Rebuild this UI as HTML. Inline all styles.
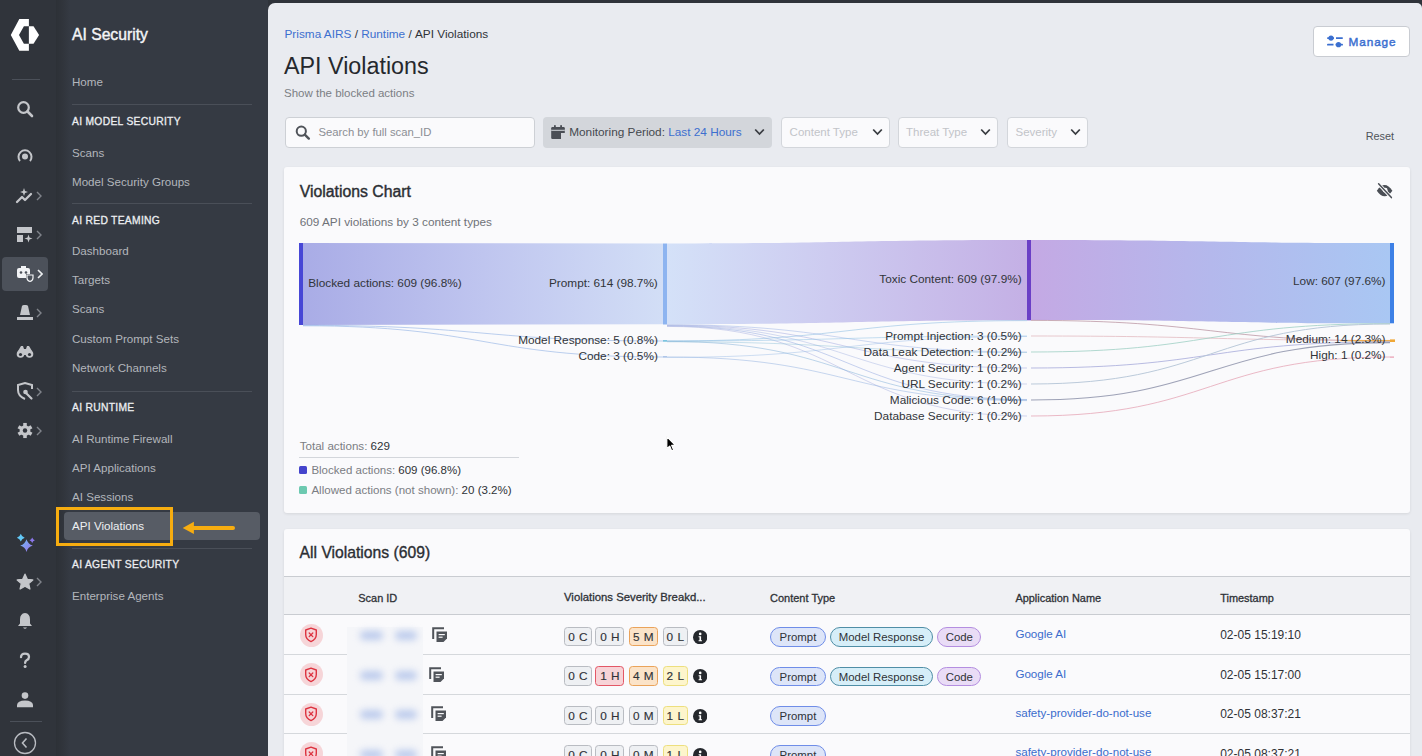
<!DOCTYPE html>
<html><head><meta charset="utf-8">
<style>
*{box-sizing:border-box;margin:0;padding:0}
html,body{width:1422px;height:756px;overflow:hidden;background:#2f333a;font-family:"Liberation Sans",sans-serif}
.abs{position:absolute}
.t{line-height:1;white-space:nowrap}
#rail{position:absolute;left:0;top:0;width:56px;height:756px;background:#30343b}
#nav{position:absolute;left:56px;top:0;width:212px;height:756px;background:linear-gradient(90deg,#2d3137 0px,#30343b 6px,#353a43 14px,#353a43 100%)}
#main{position:absolute;left:268px;top:2.5px;width:1154px;height:754px;background:#e9ebf0;border-top-left-radius:7px;border-top-right-radius:5px;overflow:hidden}
.nt{position:absolute;left:72px;font-size:11.6px;color:#b3b6bc;white-space:nowrap;line-height:14px}
.nh{position:absolute;left:72px;font-size:10.3px;color:#eceef1;white-space:nowrap;line-height:13px;letter-spacing:0.3px;-webkit-text-stroke:0.3px #eceef1}
.sep{position:absolute;left:72px;width:180px;height:1px;background:#4a4f58}
.ri{position:absolute;left:15px;width:20px;height:20px}
.chev{position:absolute;left:36px;width:6px;height:10px}
</style></head>
<body>
<div id="rail"></div>
<div id="nav"></div>
<!-- RAIL -->
<svg class="abs" style="left:0;top:0" width="50" height="60" viewBox="0 0 50 60">
<path d="M19.3 19 L28.9 19 L28.9 26.3 L23.9 26.3 L19 35 L23.9 43.7 L28.9 43.7 L28.9 50.7 L19.3 50.7 L10.8 35 Z" fill="#fff"/>
<path d="M28.9 26.3 L33.5 26.3 L39.1 35 L33.5 43.7 L28.9 43.7 Z" fill="#fff"/>
</svg>
<div class="abs" style="left:12px;top:79px;width:28px;height:1px;background:#4b5059"></div>
<!-- search -->
<svg class="abs" style="left:16px;top:100px" width="18" height="18" viewBox="0 0 18 18"><circle cx="7.5" cy="7.5" r="5.3" fill="none" stroke="#c4c6ca" stroke-width="2.2"/><path d="M11.5 11.5 L16 16" stroke="#c4c6ca" stroke-width="2.6" stroke-linecap="round"/></svg>
<!-- radio -->
<svg class="abs" style="left:16px;top:147px" width="18" height="18" viewBox="0 0 18 18"><path d="M4 14 A6.5 6.5 0 1 1 14 14" fill="none" stroke="#c4c6ca" stroke-width="2"/><circle cx="9" cy="9.5" r="3" fill="#c4c6ca"/></svg>
<!-- chart sparkle -->
<svg class="abs" style="left:15px;top:187px" width="20" height="18" viewBox="0 0 20 18"><path d="M2 15 L7 10 L10 13 L16 7" fill="none" stroke="#c4c6ca" stroke-width="2.3" stroke-linecap="round" stroke-linejoin="round"/><path d="M9 1 L10 4 L13 5 L10 6 L9 9 L8 6 L5 5 L8 4 Z" fill="#c4c6ca"/></svg>
<svg class="chev" style="top:191px" viewBox="0 0 6 10"><path d="M1 1 L5 5 L1 9" fill="none" stroke="#80848b" stroke-width="1.4"/></svg>
<!-- layout+ -->
<svg class="abs" style="left:16px;top:226px" width="18" height="17" viewBox="0 0 18 17"><rect x="1" y="1" width="15" height="6" fill="#c4c6ca"/><rect x="1" y="9" width="6" height="7" fill="#c4c6ca"/><path d="M12.5 8.5 L13.5 11.5 L16.5 12.5 L13.5 13.5 L12.5 16.5 L11.5 13.5 L8.5 12.5 L11.5 11.5 Z" fill="#c4c6ca"/></svg>
<svg class="chev" style="top:230px" viewBox="0 0 6 10"><path d="M1 1 L5 5 L1 9" fill="none" stroke="#80848b" stroke-width="1.4"/></svg>
<!-- selected -->
<div class="abs" style="left:2px;top:257px;width:46px;height:34px;background:#4c515a;border-radius:4px"></div>
<svg class="abs" style="left:16px;top:265px" width="19" height="18" viewBox="0 0 19 18"><rect x="1" y="3" width="13" height="10" rx="2" fill="#f2f3f5"/><rect x="5" y="1" width="5" height="3" fill="#f2f3f5"/><circle cx="5" cy="7.5" r="1.3" fill="#4c515a"/><circle cx="10" cy="7.5" r="1.3" fill="#4c515a"/><path d="M10 9 L18 9 L18 13 Q18 16 14 17.5 Q10 16 10 13 Z" fill="#4c515a"/><path d="M11 10 L17 10 L17 13 Q17 15.5 14 16.5 Q11 15.5 11 13 Z" fill="none" stroke="#f2f3f5" stroke-width="1.2"/></svg>
<svg class="chev" style="top:269px;left:37px" viewBox="0 0 6 10"><path d="M1 1 L5 5 L1 9" fill="none" stroke="#eceef0" stroke-width="1.6"/></svg>
<!-- siren -->
<svg class="abs" style="left:16px;top:304px" width="18" height="17" viewBox="0 0 18 17"><path d="M4 11 L6 2 Q6.5 1 8 1 L10 1 Q11.5 1 12 2 L14 11 Z" fill="#c4c6ca"/><rect x="1" y="13" width="16" height="3" fill="#c4c6ca"/></svg>
<svg class="chev" style="top:308px" viewBox="0 0 6 10"><path d="M1 1 L5 5 L1 9" fill="none" stroke="#80848b" stroke-width="1.4"/></svg>
<!-- binoculars -->
<svg class="abs" style="left:16px;top:345px" width="18" height="14" viewBox="0 0 18 14"><path d="M2 6 L5 1 L7 1 L8 4 L10 4 L11 1 L13 1 L16 6 Z" fill="#c4c6ca"/><circle cx="4.5" cy="9" r="3.8" fill="#c4c6ca"/><circle cx="13.5" cy="9" r="3.8" fill="#c4c6ca"/><rect x="7" y="6" width="4" height="4" fill="#c4c6ca"/><circle cx="4.5" cy="9.5" r="1.6" fill="#30343b"/><circle cx="13.5" cy="9.5" r="1.6" fill="#30343b"/></svg>
<!-- shield wrench -->
<svg class="abs" style="left:16px;top:382px" width="18" height="19" viewBox="0 0 18 19"><path d="M9 17 Q2 14 2 8 L2 3 L9 1 L16 3 L16 7" fill="none" stroke="#c4c6ca" stroke-width="2"/><path d="M9 10 L15.5 16.5" stroke="#c4c6ca" stroke-width="2.2" stroke-linecap="round"/><circle cx="9.5" cy="10" r="2.3" fill="#c4c6ca"/></svg>
<svg class="chev" style="top:387px" viewBox="0 0 6 10"><path d="M1 1 L5 5 L1 9" fill="none" stroke="#80848b" stroke-width="1.4"/></svg>
<!-- gear -->
<svg class="abs" style="left:17px;top:422px" width="16" height="17" viewBox="0 0 18 19"><g fill="#c4c6ca"><circle cx="9" cy="9.5" r="6"/><rect x="7" y="1" width="4" height="17"/><rect x="7" y="1" width="4" height="17" transform="rotate(60 9 9.5)"/><rect x="7" y="1" width="4" height="17" transform="rotate(120 9 9.5)"/></g><circle cx="9" cy="9.5" r="2.5" fill="#30343b"/></svg>
<svg class="chev" style="top:426px" viewBox="0 0 6 10"><path d="M1 1 L5 5 L1 9" fill="none" stroke="#80848b" stroke-width="1.4"/></svg>
<!-- sparkles colored -->
<svg class="abs" style="left:10px;top:528px" width="32" height="32" viewBox="0 0 32 32"><defs><linearGradient id="spg" x1="0" y1="0" x2="1" y2="1"><stop offset="0" stop-color="#6cc0f4"/><stop offset="1" stop-color="#9c6cec"/></linearGradient></defs><path d="M10.8 5.799999999999999 Q11.658000000000001 8.841999999999999 14.700000000000001 9.7 Q11.658000000000001 10.558 10.8 13.6 Q9.942 10.558 6.9 9.7 Q9.942 8.841999999999999 10.8 5.799999999999999 Z" fill="#62c8f6"/><path d="M22.2 9.600000000000001 Q22.794 11.706000000000001 24.9 12.3 Q22.794 12.894 22.2 15.0 Q21.605999999999998 12.894 19.5 12.3 Q21.605999999999998 11.706000000000001 22.2 9.600000000000001 Z" fill="#8c78ec"/><path d="M16.5 11.3 Q17.886 16.214000000000002 22.8 17.6 Q17.886 18.986 16.5 23.900000000000002 Q15.114 18.986 10.2 17.6 Q15.114 16.214000000000002 16.5 11.3 Z" fill="url(#spg)"/></svg>
<!-- star -->
<svg class="abs" style="left:16px;top:573px" width="18" height="18" viewBox="0 0 18 18"><path d="M9 1.2 L11.3 6.3 L16.8 6.9 L12.7 10.6 L13.9 16 L9 13.2 L4.1 16 L5.3 10.6 L1.2 6.9 L6.7 6.3 Z" fill="#c4c6ca" stroke="#c4c6ca" stroke-width="1.3" stroke-linejoin="round"/></svg>
<svg class="chev" style="top:577px" viewBox="0 0 6 10"><path d="M1 1 L5 5 L1 9" fill="none" stroke="#80848b" stroke-width="1.4"/></svg>
<!-- bell -->
<svg class="abs" style="left:17px;top:612px" width="16" height="18" viewBox="0 0 16 18"><path d="M8 1 Q13 1.5 13 7.5 L13 11.5 L15 14 L1 14 L3 11.5 L3 7.5 Q3 1.5 8 1 Z" fill="#c4c6ca"/><path d="M6 15.5 Q8 18 10 15.5 Z" fill="#c4c6ca"/></svg>
<!-- ? -->
<svg class="abs" style="left:18px;top:652px" width="14" height="17" viewBox="0 0 14 17"><path d="M3 5.2 Q3 1.6 7 1.6 Q11 1.6 11 4.9 Q11 7.1 8.6 8.3 Q7.1 9.1 7.1 10.9" fill="none" stroke="#c4c6ca" stroke-width="2.3" stroke-linecap="round"/><circle cx="7.1" cy="14.4" r="1.5" fill="#c4c6ca"/></svg>
<!-- user -->
<svg class="abs" style="left:16px;top:691px" width="18" height="17" viewBox="0 0 18 17"><circle cx="9" cy="4.6" r="3.3" fill="#c4c6ca"/><path d="M1 16.2 L1 14 Q1.5 9.4 9 9.4 Q16.5 9.4 17 14 L17 16.2 Z" fill="#c4c6ca"/></svg>
<div class="abs" style="left:10px;top:721px;width:32px;height:1px;background:#4b5059"></div>
<svg class="abs" style="left:13px;top:731px" width="24" height="24" viewBox="0 0 24 24"><circle cx="12" cy="12" r="10.5" fill="none" stroke="#b9bcc2" stroke-width="1.3"/><path d="M13.5 7.5 L9.5 12 L13.5 16.5" fill="none" stroke="#b9bcc2" stroke-width="1.6"/></svg>

<!-- NAV -->
<div class="abs" style="left:72px;top:24.8px;font-size:15.7px;color:#f4f5f7;line-height:20px;-webkit-text-stroke:0.4px #f4f5f7">AI Security</div>
<div class="nt" style="top:75px">Home</div>
<div class="sep" style="top:104px"></div>
<div class="nh" style="top:115px">AI MODEL SECURITY</div>
<div class="nt" style="top:145.5px">Scans</div>
<div class="nt" style="top:174.6px">Model Security Groups</div>
<div class="sep" style="top:203px"></div>
<div class="nh" style="top:214.2px">AI RED TEAMING</div>
<div class="nt" style="top:244px">Dashboard</div>
<div class="nt" style="top:273px">Targets</div>
<div class="nt" style="top:302.4px">Scans</div>
<div class="nt" style="top:332.2px">Custom Prompt Sets</div>
<div class="nt" style="top:361px">Network Channels</div>
<div class="sep" style="top:391px"></div>
<div class="nh" style="top:401.2px">AI RUNTIME</div>
<div class="nt" style="top:431.5px">AI Runtime Firewall</div>
<div class="nt" style="top:460.8px">API Applications</div>
<div class="nt" style="top:490px">AI Sessions</div>
<div class="abs" style="left:64px;top:512px;width:196px;height:28px;background:#575c65;border-radius:4px"></div>
<div class="nt" style="top:518.6px;color:#eef0f2">API Violations</div>
<div class="abs" style="left:56px;top:507px;width:117px;height:38.5px;border:3.2px solid #f7ad10"></div>
<svg class="abs" style="left:180px;top:520px" width="60" height="16" viewBox="0 0 60 16"><path d="M13 8 L53 8" stroke="#f7ad10" stroke-width="4" stroke-linecap="round"/><path d="M2.7 8 L13.9 1.8 L13.9 13.9 Z" fill="#f7ad10"/></svg>
<div class="sep" style="top:548px"></div>
<div class="nh" style="top:558px">AI AGENT SECURITY</div>
<div class="nt" style="top:588.5px">Enterprise Agents</div>

<div id="main"></div>
<!--MAIN1-->
<div class="abs t" style="left:284.5px;top:28.6px;font-size:11.8px;color:#2f3237;font-weight:normal;"><span style="color:#3d6fcf">Prisma AIRS</span>&nbsp;/&nbsp;<span style="color:#3d6fcf">Runtime</span>&nbsp;/&nbsp;API Violations</div>
<div class="abs t" style="left:284.0px;top:54.5px;font-size:23.3px;color:#25282d;font-weight:normal;">API Violations</div>
<div class="abs t" style="left:284.0px;top:87.7px;font-size:11.5px;color:#7b7e84;font-weight:normal;">Show the blocked actions</div>
<div class="abs" style="left:1312.5px;top:26px;width:97px;height:31px;background:#fff;border:1px solid #c9ccd2;border-radius:4px"></div>
<svg class="abs" style="left:1326px;top:35px" width="18" height="13" viewBox="0 0 18 13"><g fill="#3b6fd0"><rect x="1" y="2.2" width="16" height="1.8" rx=".9"/><rect x="1" y="8.8" width="16" height="1.8" rx=".9"/><circle cx="5" cy="3.1" r="2.6"/><circle cx="12.5" cy="9.7" r="2.6"/></g><rect x="8" y="1.5" width="2" height="3" fill="#fff"/><rect x="7.5" y="8" width="2" height="3" fill="#fff"/></svg>
<div class="abs t" style="left:1348.5px;top:36.6px;font-size:11.8px;color:#3b6fd0;font-weight:normal;letter-spacing:0.9px;-webkit-text-stroke:0.45px #3b6fd0">Manage</div>
<div class="abs" style="left:284.5px;top:116.5px;width:250px;height:31px;background:#fafafc;border:1px solid #cdd0d5;border-radius:4px"></div>
<svg class="abs" style="left:295px;top:125px" width="16" height="15" viewBox="0 0 16 15"><circle cx="6.3" cy="6.2" r="4.6" fill="none" stroke="#50545a" stroke-width="2"/><path d="M9.8 9.6 L13.8 13.6" stroke="#50545a" stroke-width="2.4" stroke-linecap="round"/></svg>
<div class="abs t" style="left:318.4px;top:126.5px;font-size:11.3px;color:#8b8e94;font-weight:normal;">Search by full scan_ID</div>
<div class="abs" style="left:543px;top:116.5px;width:229px;height:31px;background:#d3d6db;border-radius:4px"></div>
<svg class="abs" style="left:550px;top:124px" width="16" height="16" viewBox="0 0 16 16"><g fill="#4a4e55"><rect x="1.2" y="3" width="13.6" height="12" rx="1.2"/><rect x="4" y="1.2" width="1.8" height="3"/><rect x="10.2" y="1.2" width="1.8" height="3"/></g><rect x="1.2" y="5.8" width="13.6" height="1" fill="#d3d6db"/><rect x="11" y="9" width="4" height="6" fill="#d3d6db"/></svg>
<div class="abs t" style="left:569.2px;top:126.9px;font-size:11.8px;color:#45494f;font-weight:normal;">Monitoring Period: <span style="color:#3d6fcf">Last 24 Hours</span></div>
<svg class="abs" style="left:753.5px;top:127.5px" width="11" height="8" viewBox="0 0 11 8"><path d="M1.2 1.5 L5.5 6 L9.8 1.5" fill="none" stroke="#3a3d42" stroke-width="1.8"/></svg>
<div class="abs" style="left:781px;top:116.5px;width:108.5px;height:31px;background:#fafafc;border:1px solid #d3d6db;border-radius:4px"></div>
<div class="abs t" style="left:789.6px;top:127.3px;font-size:11.5px;color:#c2c4c9;font-weight:normal;">Content Type</div>
<svg class="abs" style="left:871.5px;top:127.5px" width="11" height="8" viewBox="0 0 11 8"><path d="M1.2 1.5 L5.5 6 L9.8 1.5" fill="none" stroke="#3a3d42" stroke-width="1.8"/></svg>
<div class="abs" style="left:897.5px;top:116.5px;width:100.0px;height:31px;background:#fafafc;border:1px solid #d3d6db;border-radius:4px"></div>
<div class="abs t" style="left:906.0px;top:127.3px;font-size:11.5px;color:#c2c4c9;font-weight:normal;">Threat Type</div>
<svg class="abs" style="left:980px;top:127.5px" width="11" height="8" viewBox="0 0 11 8"><path d="M1.2 1.5 L5.5 6 L9.8 1.5" fill="none" stroke="#3a3d42" stroke-width="1.8"/></svg>
<div class="abs" style="left:1007px;top:116.5px;width:80.5px;height:31px;background:#fafafc;border:1px solid #d3d6db;border-radius:4px"></div>
<div class="abs t" style="left:1015.5px;top:127.3px;font-size:11.5px;color:#c2c4c9;font-weight:normal;">Severity</div>
<svg class="abs" style="left:1069.5px;top:127.5px" width="11" height="8" viewBox="0 0 11 8"><path d="M1.2 1.5 L5.5 6 L9.8 1.5" fill="none" stroke="#3a3d42" stroke-width="1.8"/></svg>
<div class="abs t" style="left:1365.7px;top:131.2px;font-size:10.9px;color:#50545a;font-weight:normal;">Reset</div>
<!--/MAIN1-->
<!--MAIN2-->
<div class="abs" style="left:284px;top:167px;width:1126px;height:345.5px;background:#fafafc;border-radius:3px;box-shadow:0 1px 3px rgba(0,0,0,0.09)"></div>
<div class="abs t" style="left:299.7px;top:183.5px;font-size:15.8px;color:#2b2e33;font-weight:normal;-webkit-text-stroke:0.4px #2b2e33;">Violations Chart</div>
<div class="abs t" style="left:299.7px;top:216.0px;font-size:11.77px;color:#6f7278;font-weight:normal;">609 API violations by 3 content types</div>
<svg class="abs" style="left:1375px;top:182px" width="19" height="18" viewBox="0 0 19 18"><path d="M1.8 8.7 Q9.6 -2.5 17.4 8.7 Q9.6 19.9 1.8 8.7 Z" fill="#4a4e55"/><circle cx="10.2" cy="8.2" r="2.4" fill="#fafafc"/><path d="M3.6 1.8 L16.4 15.6" stroke="#fafafc" stroke-width="3.4"/><path d="M3.6 1.8 L16.4 15.6" stroke="#4a4e55" stroke-width="1.5" stroke-linecap="round"/></svg>
<svg class="abs" style="left:0;top:0" width="1422" height="756" viewBox="0 0 1422 756">
<defs>
<linearGradient id="g1" x1="0" x2="1"><stop offset="0" stop-color="#a9ace6"/><stop offset="0.5" stop-color="#bfc5ef"/><stop offset="1" stop-color="#d2def6"/></linearGradient>
<linearGradient id="g2" x1="0" x2="1"><stop offset="0" stop-color="#d4e1f8"/><stop offset="0.45" stop-color="#cdcbf0"/><stop offset="1" stop-color="#c4b0e5"/></linearGradient>
<linearGradient id="g3" x1="0" x2="1"><stop offset="0" stop-color="#c4a9e4"/><stop offset="0.5" stop-color="#b4b8ec"/><stop offset="1" stop-color="#a9c7f3"/></linearGradient>
</defs>
<path d="M303 243 L663 243.5 L663 324.3 L303 325 Z" fill="url(#g1)"/>
<path d="M667 243.5 C849 243.5 849 240 1027 240 L1027 320.3 C849 320.3 849 324.3 667 324.3 Z" fill="url(#g2)"/>
<path d="M1031 240 C1210 240 1210 243 1390 243 L1390 323.3 C1210 323.3 1210 320 1031 320 Z" fill="url(#g3)"/>
<path d="M303 325.3 C483.0 325.3 483.0 341 663 341" fill="none" stroke="#8fb0e4" stroke-width="1.0" stroke-opacity="0.6"/>
<path d="M303 325.8 C483.0 325.8 483.0 357 663 357" fill="none" stroke="#8fb0e4" stroke-width="1.0" stroke-opacity="0.6"/>
<path d="M667 324.8 C847.0 324.8 847.0 352 1027 352" fill="none" stroke="#9bb3e6" stroke-width="1.0" stroke-opacity="0.5"/>
<path d="M667 325.2 C847.0 325.2 847.0 368 1027 368" fill="none" stroke="#9fa8e0" stroke-width="1.0" stroke-opacity="0.5"/>
<path d="M667 325.6 C847.0 325.6 847.0 384 1027 384" fill="none" stroke="#a9b8e4" stroke-width="1.0" stroke-opacity="0.5"/>
<path d="M667 326 C847.0 326 847.0 399.5 1027 399.5" fill="none" stroke="#8fa6e0" stroke-width="1.0" stroke-opacity="0.5"/>
<path d="M667 326.4 C847.0 326.4 847.0 416 1027 416" fill="none" stroke="#a8b0e0" stroke-width="1.0" stroke-opacity="0.5"/>
<path d="M667 341 C847.0 341 847.0 320.6 1027 320.6" fill="none" stroke="#7fb6e0" stroke-width="1.0" stroke-opacity="0.5"/>
<path d="M667 341 C847.0 341 847.0 336 1027 336" fill="none" stroke="#8cc0e4" stroke-width="1.0" stroke-opacity="0.5"/>
<path d="M667 341.4 C847.0 341.4 847.0 400 1027 400" fill="none" stroke="#7eaed8" stroke-width="1.0" stroke-opacity="0.5"/>
<path d="M667 341.8 C847.0 341.8 847.0 352.5 1027 352.5" fill="none" stroke="#94c4da" stroke-width="1.0" stroke-opacity="0.5"/>
<path d="M667 357 C847.0 357 847.0 400.6 1027 400.6" fill="none" stroke="#8fb0e0" stroke-width="1.0" stroke-opacity="0.5"/>
<path d="M667 357.4 C847.0 357.4 847.0 336.5 1027 336.5" fill="none" stroke="#a0c0e8" stroke-width="1.0" stroke-opacity="0.5"/>
<path d="M1031 320.4 C1210.5 320.4 1210.5 341 1390 341" fill="none" stroke="#a87888" stroke-width="1.0" stroke-opacity="0.6"/>
<path d="M1031 336 C1210.5 336 1210.5 340.4 1390 340.4" fill="none" stroke="#e6c2c8" stroke-width="1.0" stroke-opacity="0.9"/>
<path d="M1031 352 C1210.5 352 1210.5 323.6 1390 323.6" fill="none" stroke="#9fd0c4" stroke-width="1.0" stroke-opacity="0.8"/>
<path d="M1031 368 C1210.5 368 1210.5 341.8 1390 341.8" fill="none" stroke="#9b9fd6" stroke-width="1.0" stroke-opacity="0.7"/>
<path d="M1031 384 C1210.5 384 1210.5 324 1390 324" fill="none" stroke="#b4c4d6" stroke-width="1.0" stroke-opacity="0.9"/>
<path d="M1031 400 C1210.5 400 1210.5 342.6 1390 342.6" fill="none" stroke="#606888" stroke-width="1.1" stroke-opacity="0.6"/>
<path d="M1031 416 C1210.5 416 1210.5 357 1390 357" fill="none" stroke="#e6a8b8" stroke-width="1.0" stroke-opacity="0.8"/>
<rect x="299" y="243" width="4" height="82" fill="#4747d6"/>
<rect x="663" y="243.5" width="4" height="81" fill="#8db4f0"/>
<rect x="1027" y="240" width="4" height="80.3" fill="#6a3fc6"/>
<rect x="1390" y="243" width="4" height="80.3" fill="#3d80e6"/>
<rect x="663" y="340.2" width="4" height="1.4" fill="#5fb8d8"/>
<rect x="663" y="356.3" width="4" height="1.2" fill="#8fb0e0"/>
<path d="M1340 340.6 C1365.0 340.6 1365.0 340.6 1390 340.6" fill="none" stroke="#f0a838" stroke-width="1.4" stroke-opacity="0.8"/>
<rect x="1390" y="339.4" width="5" height="2.6" fill="#f0a838"/>
<rect x="1390" y="356.5" width="4" height="1.2" fill="#e89ab0"/>
</svg>
<div class="abs t" style="left:308.2px;top:278.3px;font-size:11.8px;color:#313439;font-weight:normal;">Blocked actions: 609 (96.8%)</div>
<div class="abs t" style="right:764.2px;top:278.3px;font-size:11.8px;color:#313439;font-weight:normal;">Prompt: 614 (98.7%)</div>
<div class="abs t" style="right:764.2px;top:334.8px;font-size:11.8px;color:#313439;font-weight:normal;">Model Response: 5 (0.8%)</div>
<div class="abs t" style="right:764.2px;top:350.6px;font-size:11.8px;color:#313439;font-weight:normal;">Code: 3 (0.5%)</div>
<div class="abs t" style="right:400.4px;top:274.3px;font-size:11.8px;color:#313439;font-weight:normal;">Toxic Content: 609 (97.9%)</div>
<div class="abs t" style="right:400.4px;top:331.0px;font-size:11.8px;color:#313439;font-weight:normal;">Prompt Injection: 3 (0.5%)</div>
<div class="abs t" style="right:400.4px;top:347.0px;font-size:11.8px;color:#313439;font-weight:normal;">Data Leak Detection: 1 (0.2%)</div>
<div class="abs t" style="right:400.4px;top:362.9px;font-size:11.8px;color:#313439;font-weight:normal;">Agent Security: 1 (0.2%)</div>
<div class="abs t" style="right:400.4px;top:378.9px;font-size:11.8px;color:#313439;font-weight:normal;">URL Security: 1 (0.2%)</div>
<div class="abs t" style="right:400.4px;top:394.8px;font-size:11.8px;color:#313439;font-weight:normal;">Malicious Code: 6 (1.0%)</div>
<div class="abs t" style="right:400.4px;top:410.8px;font-size:11.8px;color:#313439;font-weight:normal;">Database Security: 1 (0.2%)</div>
<div class="abs t" style="right:36.5px;top:276.2px;font-size:11.8px;color:#313439;font-weight:normal;">Low: 607 (97.6%)</div>
<div class="abs t" style="right:36.5px;top:334.2px;font-size:11.8px;color:#313439;font-weight:normal;">Medium: 14 (2.3%)</div>
<div class="abs t" style="right:36.5px;top:350.3px;font-size:11.8px;color:#313439;font-weight:normal;">High: 1 (0.2%)</div>
<div class="abs t" style="left:299.7px;top:440.4px;font-size:11.6px;color:#7a7d83;font-weight:normal;">Total actions: <span style="color:#2f3237">629</span></div>
<div class="abs" style="left:299px;top:457px;width:220px;height:1px;background:#d3d6db"></div>
<div class="abs" style="left:299px;top:466.3px;width:7.5px;height:7.5px;background:#4444cc;border-radius:1.5px"></div>
<div class="abs t" style="left:311.4px;top:465.1px;font-size:11.5px;color:#7a7d83;font-weight:normal;">Blocked actions: <span style="color:#2f3237">609 (96.8%)</span></div>
<div class="abs" style="left:299px;top:486.3px;width:7.5px;height:7.5px;background:#6cc9b0;border-radius:1.5px"></div>
<div class="abs t" style="left:311.4px;top:485.2px;font-size:11.55px;color:#7a7d83;font-weight:normal;">Allowed actions (not shown): <span style="color:#2f3237">20 (3.2%)</span></div>
<!--/MAIN2-->
<!--MAIN3-->
<div class="abs" style="left:284px;top:529px;width:1126px;height:240px;background:#fafafc;border-radius:3px;box-shadow:0 1px 3px rgba(0,0,0,0.09)"></div>
<div class="abs t" style="left:299.6px;top:545.2px;font-size:15.7px;color:#2b2e33;font-weight:normal;-webkit-text-stroke:0.35px #2b2e33;">All Violations (609)</div>
<div class="abs" style="left:284px;top:576px;width:1126px;height:39px;background:#f0f1f4;border-top:1px solid #c9ccd1;border-bottom:1px solid #c9ccd1"></div>
<div class="abs t" style="left:358.3px;top:592.6px;font-size:10.96px;color:#2f3237;font-weight:normal;-webkit-text-stroke:0.3px #2f3237;">Scan ID</div>
<div class="abs t" style="left:564.0px;top:592.3px;font-size:11.35px;color:#2f3237;font-weight:normal;-webkit-text-stroke:0.3px #2f3237;">Violations Severity Breakd...</div>
<div class="abs t" style="left:770.0px;top:592.6px;font-size:11.0px;color:#2f3237;font-weight:normal;-webkit-text-stroke:0.3px #2f3237;">Content Type</div>
<div class="abs t" style="left:1015.4px;top:592.6px;font-size:10.95px;color:#2f3237;font-weight:normal;-webkit-text-stroke:0.3px #2f3237;">Application Name</div>
<div class="abs t" style="left:1220.2px;top:592.6px;font-size:10.95px;color:#2f3237;font-weight:normal;-webkit-text-stroke:0.3px #2f3237;">Timestamp</div>
<div class="abs" style="left:284px;top:654.0px;width:1126px;height:1px;background:#d5d8dc"></div>
<div class="abs" style="left:284px;top:693.7px;width:1126px;height:1px;background:#d5d8dc"></div>
<div class="abs" style="left:284px;top:733.2px;width:1126px;height:1px;background:#d5d8dc"></div>
<div class="abs" style="left:347px;top:627px;width:76px;height:130px;background:#f5f6f9"></div>
<div class="abs" style="left:299.59999999999997px;top:623.6999999999999px;width:23.2px;height:23.2px;border-radius:50%;background:#f6d5d8"></div>
<svg class="abs" style="left:304.2px;top:627.3px" width="14" height="16" viewBox="0 0 14 16"><path d="M7 1.2 L12.3 3 L12.3 7.6 Q12.3 12.3 7 14.6 Q1.7 12.3 1.7 7.6 L1.7 3 Z" fill="none" stroke="#dd3340" stroke-width="1.4" stroke-linejoin="round"/><path d="M5.2 6 L8.8 9.6 M8.8 6 L5.2 9.6" stroke="#dd3340" stroke-width="1.3" stroke-linecap="round"/></svg>
<div class="abs" style="left:360px;top:631.3px;width:23px;height:9px;border-radius:5px;background:#bccbec;filter:blur(3.5px)"></div>
<div class="abs" style="left:395px;top:631.3px;width:22px;height:9px;border-radius:5px;background:#bccbec;filter:blur(3.5px)"></div>
<svg class="abs" style="left:431.5px;top:627.3px" width="16" height="16" viewBox="0 0 16 16"><path d="M1.2 12 L1.2 1.2 L12 1.2" fill="none" stroke="#50545a" stroke-width="2"/><path d="M4.5 4.5 L15 4.5 L15 11.5 L11.5 15 L4.5 15 Z" fill="#50545a"/><rect x="6.6" y="7" width="6.2" height="1.2" fill="#fafafc"/><rect x="6.6" y="9.6" width="4" height="1.2" fill="#fafafc"/></svg>
<div class="abs t" style="left:564.3px;top:626.8px;width:27.3px;height:19.3px;background:#eef0f3;border:1px solid #b9bcc2;border-radius:3.5px;font-size:11.8px;line-height:19.2px;text-align:center;color:#2f3237;letter-spacing:0.5px;padding-left:0.5px;-webkit-text-stroke:0.15px #2f3237">0 C</div>
<div class="abs t" style="left:595.4px;top:626.8px;width:29px;height:19.3px;background:#eef0f3;border:1px solid #b9bcc2;border-radius:3.5px;font-size:11.8px;line-height:19.2px;text-align:center;color:#2f3237;letter-spacing:0.5px;padding-left:0.5px;-webkit-text-stroke:0.15px #2f3237">0 H</div>
<div class="abs t" style="left:628.7px;top:626.8px;width:29.3px;height:19.3px;background:#fbe3c8;border:1px solid #eaa35a;border-radius:3.5px;font-size:11.8px;line-height:19.2px;text-align:center;color:#2f3237;letter-spacing:0.5px;padding-left:0.5px;-webkit-text-stroke:0.15px #2f3237">5 M</div>
<div class="abs t" style="left:662.7px;top:626.8px;width:25.2px;height:19.3px;background:#eef0f3;border:1px solid #b9bcc2;border-radius:3.5px;font-size:11.8px;line-height:19.2px;text-align:center;color:#2f3237;letter-spacing:0.5px;padding-left:0.5px;-webkit-text-stroke:0.15px #2f3237">0 L</div>
<svg class="abs" style="left:692.5999999999999px;top:629.5999999999999px" width="14.4" height="14.4" viewBox="0 0 14.4 14.4"><circle cx="7.2" cy="7.2" r="7.2" fill="#25282d"/><circle cx="7.2" cy="3.9" r="1.3" fill="#fff"/><path d="M5.6 6.2 L8.1 6.2 L8.1 10.2 L9 10.2 L9 11.3 L5.6 11.3 L5.6 10.2 L6.5 10.2 L6.5 7.3 L5.6 7.3 Z" fill="#fff"/></svg>
<div class="abs t" style="left:770.1px;top:627.0999999999999px;width:55.7px;height:19.6px;background:#dde5f8;border:1px solid #6f8de8;border-radius:10px;font-size:11.4px;line-height:19px;text-align:center;color:#2f3237">Prompt</div>
<div class="abs t" style="left:830.0px;top:627.0999999999999px;width:103px;height:19.6px;background:#d6eef8;border:1px solid #4f8ea6;border-radius:10px;font-size:11.4px;line-height:19px;text-align:center;color:#2f3237">Model Response</div>
<div class="abs t" style="left:937.2px;top:627.0999999999999px;width:44.2px;height:19.6px;background:#e9dcf6;border:1px solid #b48ee0;border-radius:10px;font-size:11.4px;line-height:19px;text-align:center;color:#2f3237">Code</div>
<div class="abs t" style="left:1015.4px;top:628.1px;font-size:11.6px;color:#3b6ccc;font-weight:normal;">Google AI</div>
<div class="abs t" style="left:1220.2px;top:629.4px;font-size:12.0px;color:#2f3237;font-weight:normal;">02-05 15:19:10</div>
<div class="abs" style="left:299.59999999999997px;top:663.1999999999999px;width:23.2px;height:23.2px;border-radius:50%;background:#f6d5d8"></div>
<svg class="abs" style="left:304.2px;top:666.8px" width="14" height="16" viewBox="0 0 14 16"><path d="M7 1.2 L12.3 3 L12.3 7.6 Q12.3 12.3 7 14.6 Q1.7 12.3 1.7 7.6 L1.7 3 Z" fill="none" stroke="#dd3340" stroke-width="1.4" stroke-linejoin="round"/><path d="M5.2 6 L8.8 9.6 M8.8 6 L5.2 9.6" stroke="#dd3340" stroke-width="1.3" stroke-linecap="round"/></svg>
<div class="abs" style="left:360px;top:670.8px;width:23px;height:9px;border-radius:5px;background:#bccbec;filter:blur(3.5px)"></div>
<div class="abs" style="left:395px;top:670.8px;width:22px;height:9px;border-radius:5px;background:#bccbec;filter:blur(3.5px)"></div>
<svg class="abs" style="left:428.5px;top:666.8px" width="16" height="16" viewBox="0 0 16 16"><path d="M1.2 12 L1.2 1.2 L12 1.2" fill="none" stroke="#50545a" stroke-width="2"/><path d="M4.5 4.5 L15 4.5 L15 11.5 L11.5 15 L4.5 15 Z" fill="#50545a"/><rect x="6.6" y="7" width="6.2" height="1.2" fill="#fafafc"/><rect x="6.6" y="9.6" width="4" height="1.2" fill="#fafafc"/></svg>
<div class="abs t" style="left:564.3px;top:666.3px;width:27.3px;height:19.3px;background:#eef0f3;border:1px solid #b9bcc2;border-radius:3.5px;font-size:11.8px;line-height:19.2px;text-align:center;color:#2f3237;letter-spacing:0.5px;padding-left:0.5px;-webkit-text-stroke:0.15px #2f3237">0 C</div>
<div class="abs t" style="left:595.4px;top:666.3px;width:29px;height:19.3px;background:#f7d3d7;border:1px solid #e35766;border-radius:3.5px;font-size:11.8px;line-height:19.2px;text-align:center;color:#2f3237;letter-spacing:0.5px;padding-left:0.5px;-webkit-text-stroke:0.15px #2f3237">1 H</div>
<div class="abs t" style="left:628.7px;top:666.3px;width:29.3px;height:19.3px;background:#fbe3c8;border:1px solid #eaa35a;border-radius:3.5px;font-size:11.8px;line-height:19.2px;text-align:center;color:#2f3237;letter-spacing:0.5px;padding-left:0.5px;-webkit-text-stroke:0.15px #2f3237">4 M</div>
<div class="abs t" style="left:662.7px;top:666.3px;width:25.2px;height:19.3px;background:#fdf5cc;border:1px solid #eddf7e;border-radius:3.5px;font-size:11.8px;line-height:19.2px;text-align:center;color:#2f3237;letter-spacing:0.5px;padding-left:0.5px;-webkit-text-stroke:0.15px #2f3237">2 L</div>
<svg class="abs" style="left:692.5999999999999px;top:669.0999999999999px" width="14.4" height="14.4" viewBox="0 0 14.4 14.4"><circle cx="7.2" cy="7.2" r="7.2" fill="#25282d"/><circle cx="7.2" cy="3.9" r="1.3" fill="#fff"/><path d="M5.6 6.2 L8.1 6.2 L8.1 10.2 L9 10.2 L9 11.3 L5.6 11.3 L5.6 10.2 L6.5 10.2 L6.5 7.3 L5.6 7.3 Z" fill="#fff"/></svg>
<div class="abs t" style="left:770.1px;top:666.5999999999999px;width:55.7px;height:19.6px;background:#dde5f8;border:1px solid #6f8de8;border-radius:10px;font-size:11.4px;line-height:19px;text-align:center;color:#2f3237">Prompt</div>
<div class="abs t" style="left:830.0px;top:666.5999999999999px;width:103px;height:19.6px;background:#d6eef8;border:1px solid #4f8ea6;border-radius:10px;font-size:11.4px;line-height:19px;text-align:center;color:#2f3237">Model Response</div>
<div class="abs t" style="left:937.2px;top:666.5999999999999px;width:44.2px;height:19.6px;background:#e9dcf6;border:1px solid #b48ee0;border-radius:10px;font-size:11.4px;line-height:19px;text-align:center;color:#2f3237">Code</div>
<div class="abs t" style="left:1015.4px;top:667.6px;font-size:11.6px;color:#3b6ccc;font-weight:normal;">Google AI</div>
<div class="abs t" style="left:1220.2px;top:668.9px;font-size:12.0px;color:#2f3237;font-weight:normal;">02-05 15:17:00</div>
<div class="abs" style="left:299.59999999999997px;top:702.6px;width:23.2px;height:23.2px;border-radius:50%;background:#f6d5d8"></div>
<svg class="abs" style="left:304.2px;top:706.2px" width="14" height="16" viewBox="0 0 14 16"><path d="M7 1.2 L12.3 3 L12.3 7.6 Q12.3 12.3 7 14.6 Q1.7 12.3 1.7 7.6 L1.7 3 Z" fill="none" stroke="#dd3340" stroke-width="1.4" stroke-linejoin="round"/><path d="M5.2 6 L8.8 9.6 M8.8 6 L5.2 9.6" stroke="#dd3340" stroke-width="1.3" stroke-linecap="round"/></svg>
<div class="abs" style="left:360px;top:710.2px;width:23px;height:9px;border-radius:5px;background:#bccbec;filter:blur(3.5px)"></div>
<div class="abs" style="left:395px;top:710.2px;width:22px;height:9px;border-radius:5px;background:#bccbec;filter:blur(3.5px)"></div>
<svg class="abs" style="left:430.5px;top:706.2px" width="16" height="16" viewBox="0 0 16 16"><path d="M1.2 12 L1.2 1.2 L12 1.2" fill="none" stroke="#50545a" stroke-width="2"/><path d="M4.5 4.5 L15 4.5 L15 11.5 L11.5 15 L4.5 15 Z" fill="#50545a"/><rect x="6.6" y="7" width="6.2" height="1.2" fill="#fafafc"/><rect x="6.6" y="9.6" width="4" height="1.2" fill="#fafafc"/></svg>
<div class="abs t" style="left:564.3px;top:705.7px;width:27.3px;height:19.3px;background:#eef0f3;border:1px solid #b9bcc2;border-radius:3.5px;font-size:11.8px;line-height:19.2px;text-align:center;color:#2f3237;letter-spacing:0.5px;padding-left:0.5px;-webkit-text-stroke:0.15px #2f3237">0 C</div>
<div class="abs t" style="left:595.4px;top:705.7px;width:29px;height:19.3px;background:#eef0f3;border:1px solid #b9bcc2;border-radius:3.5px;font-size:11.8px;line-height:19.2px;text-align:center;color:#2f3237;letter-spacing:0.5px;padding-left:0.5px;-webkit-text-stroke:0.15px #2f3237">0 H</div>
<div class="abs t" style="left:628.7px;top:705.7px;width:29.3px;height:19.3px;background:#eef0f3;border:1px solid #b9bcc2;border-radius:3.5px;font-size:11.8px;line-height:19.2px;text-align:center;color:#2f3237;letter-spacing:0.5px;padding-left:0.5px;-webkit-text-stroke:0.15px #2f3237">0 M</div>
<div class="abs t" style="left:662.7px;top:705.7px;width:25.2px;height:19.3px;background:#fdf5cc;border:1px solid #eddf7e;border-radius:3.5px;font-size:11.8px;line-height:19.2px;text-align:center;color:#2f3237;letter-spacing:0.5px;padding-left:0.5px;-webkit-text-stroke:0.15px #2f3237">1 L</div>
<svg class="abs" style="left:692.5999999999999px;top:708.5px" width="14.4" height="14.4" viewBox="0 0 14.4 14.4"><circle cx="7.2" cy="7.2" r="7.2" fill="#25282d"/><circle cx="7.2" cy="3.9" r="1.3" fill="#fff"/><path d="M5.6 6.2 L8.1 6.2 L8.1 10.2 L9 10.2 L9 11.3 L5.6 11.3 L5.6 10.2 L6.5 10.2 L6.5 7.3 L5.6 7.3 Z" fill="#fff"/></svg>
<div class="abs t" style="left:770.1px;top:706.0px;width:55.7px;height:19.6px;background:#dde5f8;border:1px solid #6f8de8;border-radius:10px;font-size:11.4px;line-height:19px;text-align:center;color:#2f3237">Prompt</div>
<div class="abs t" style="left:1015.4px;top:707.0px;font-size:11.6px;color:#3b6ccc;font-weight:normal;">safety-provider-do-not-use</div>
<div class="abs t" style="left:1220.2px;top:708.3px;font-size:12.0px;color:#2f3237;font-weight:normal;">02-05 08:37:21</div>
<div class="abs" style="left:299.59999999999997px;top:742.0px;width:23.2px;height:23.2px;border-radius:50%;background:#f6d5d8"></div>
<svg class="abs" style="left:304.2px;top:745.6px" width="14" height="16" viewBox="0 0 14 16"><path d="M7 1.2 L12.3 3 L12.3 7.6 Q12.3 12.3 7 14.6 Q1.7 12.3 1.7 7.6 L1.7 3 Z" fill="none" stroke="#dd3340" stroke-width="1.4" stroke-linejoin="round"/><path d="M5.2 6 L8.8 9.6 M8.8 6 L5.2 9.6" stroke="#dd3340" stroke-width="1.3" stroke-linecap="round"/></svg>
<div class="abs" style="left:360px;top:749.6px;width:23px;height:9px;border-radius:5px;background:#bccbec;filter:blur(3.5px)"></div>
<div class="abs" style="left:395px;top:749.6px;width:22px;height:9px;border-radius:5px;background:#bccbec;filter:blur(3.5px)"></div>
<svg class="abs" style="left:430.5px;top:745.6px" width="16" height="16" viewBox="0 0 16 16"><path d="M1.2 12 L1.2 1.2 L12 1.2" fill="none" stroke="#50545a" stroke-width="2"/><path d="M4.5 4.5 L15 4.5 L15 11.5 L11.5 15 L4.5 15 Z" fill="#50545a"/><rect x="6.6" y="7" width="6.2" height="1.2" fill="#fafafc"/><rect x="6.6" y="9.6" width="4" height="1.2" fill="#fafafc"/></svg>
<div class="abs t" style="left:564.3px;top:745.1px;width:27.3px;height:19.3px;background:#eef0f3;border:1px solid #b9bcc2;border-radius:3.5px;font-size:11.8px;line-height:19.2px;text-align:center;color:#2f3237;letter-spacing:0.5px;padding-left:0.5px;-webkit-text-stroke:0.15px #2f3237">0 C</div>
<div class="abs t" style="left:595.4px;top:745.1px;width:29px;height:19.3px;background:#eef0f3;border:1px solid #b9bcc2;border-radius:3.5px;font-size:11.8px;line-height:19.2px;text-align:center;color:#2f3237;letter-spacing:0.5px;padding-left:0.5px;-webkit-text-stroke:0.15px #2f3237">0 H</div>
<div class="abs t" style="left:628.7px;top:745.1px;width:29.3px;height:19.3px;background:#eef0f3;border:1px solid #b9bcc2;border-radius:3.5px;font-size:11.8px;line-height:19.2px;text-align:center;color:#2f3237;letter-spacing:0.5px;padding-left:0.5px;-webkit-text-stroke:0.15px #2f3237">0 M</div>
<div class="abs t" style="left:662.7px;top:745.1px;width:25.2px;height:19.3px;background:#fdf5cc;border:1px solid #eddf7e;border-radius:3.5px;font-size:11.8px;line-height:19.2px;text-align:center;color:#2f3237;letter-spacing:0.5px;padding-left:0.5px;-webkit-text-stroke:0.15px #2f3237">1 L</div>
<svg class="abs" style="left:692.5999999999999px;top:747.9px" width="14.4" height="14.4" viewBox="0 0 14.4 14.4"><circle cx="7.2" cy="7.2" r="7.2" fill="#25282d"/><circle cx="7.2" cy="3.9" r="1.3" fill="#fff"/><path d="M5.6 6.2 L8.1 6.2 L8.1 10.2 L9 10.2 L9 11.3 L5.6 11.3 L5.6 10.2 L6.5 10.2 L6.5 7.3 L5.6 7.3 Z" fill="#fff"/></svg>
<div class="abs t" style="left:770.1px;top:745.4px;width:55.7px;height:19.6px;background:#dde5f8;border:1px solid #6f8de8;border-radius:10px;font-size:11.4px;line-height:19px;text-align:center;color:#2f3237">Prompt</div>
<div class="abs t" style="left:1015.4px;top:746.4px;font-size:11.6px;color:#3b6ccc;font-weight:normal;">safety-provider-do-not-use</div>
<div class="abs t" style="left:1220.2px;top:747.7px;font-size:12.0px;color:#2f3237;font-weight:normal;">02-05 08:37:21</div>
<svg class="abs" style="left:664px;top:434px" width="16" height="21" viewBox="0 0 16 21"><path d="M2.8 2.6 L2.8 14.8 L5.7 12.1 L7.7 16.9 L9.7 16.1 L7.7 11.4 L11.4 11.4 Z" fill="#000" stroke="#fff" stroke-width="1.2" stroke-linejoin="round"/></svg>
<!--/MAIN3-->
</body></html>
